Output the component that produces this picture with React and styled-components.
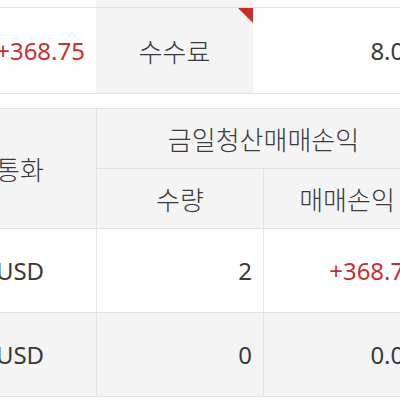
import React from 'react';
import styled, { createGlobalStyle } from 'styled-components';

const GlobalStyle = createGlobalStyle`
html, body {
  margin: 0;
  padding: 0;
  background: #fff;
  overflow: hidden;
}
body {
  font-family: 'Noto Sans', 'Noto Sans CJK KR', sans-serif;
  color: #3a3a3a;
}`;

const lineColor = '#e2e2e2';
const grayBg = '#f4f4f4';
const red = '#c9302c';

const Page = styled.div`
width: 486px;
margin-left: -56px;
margin-top: -78px;
display: flex;
flex-direction: column;
gap: 14px;`;

const SummaryTable = styled.div`
display: flex;
flex-direction: column;`;

const SummaryRow = styled.div`
display: grid;
grid-template-columns: 152px 157px 177px;
height: 86px;
border-bottom: 1px solid ${lineColor};
box-sizing: border-box;`;

const SummaryCell = styled.div`
position: relative;
display: flex;
align-items: center;
justify-content: ${(p) => (p.$center ? 'center' : 'flex-end')};
padding-right: ${(p) => (p.$center ? 0 : p.$pad || 12)}px;
background: ${(p) => (p.$gray ? grayBg : '#fff')};
color: ${(p) => (p.$red ? red : '#3a3a3a')};
font-size: ${(p) => (p.$kr ? 26 : 24)}px;
font-weight: ${(p) => (p.$kr ? 300 : 400)};
white-space: nowrap;`;

const Corner = styled.span`
position: absolute;
top: 0;
right: 0;
width: 0;
height: 0;
border-top: 15px solid #cf2a27;
border-left: 15px solid transparent;`;

const PnlTable = styled.div`
display: grid;
grid-template-columns: 153px 167px 166px;
grid-template-rows: 60px 60px 84px 84px;
border-top: 1px solid ${lineColor};`;

const Cell = styled.div`
display: flex;
align-items: center;
justify-content: ${(p) => p.$justify || 'center'};
padding-right: ${(p) => (p.$justify === 'flex-end' ? p.$pad || 12 : 0)}px;
grid-column: ${(p) => p.$col || 'auto'};
grid-row: ${(p) => p.$row || 'auto'};
background: ${(p) => (p.$gray ? grayBg : '#fff')};
color: ${(p) => (p.$red ? red : '#3a3a3a')};
border-bottom: 1px solid ${lineColor};
border-right: ${(p) => (p.$last ? 'none' : `1px solid ${lineColor}`)};
font-size: ${(p) => (p.$kr ? 26 : 24)}px;
font-weight: ${(p) => (p.$kr ? 300 : 400)};
white-space: nowrap;
box-sizing: border-box;`;

const rows = [
  { cur: 'USD', qty: '2', pnl: '+368.75', red: true, gray: false },
  { cur: 'USD', qty: '0', pnl: '0.00', red: false, gray: true },
];

const App = () => (
  <>
    <GlobalStyle />
    <Page>
      <SummaryTable>
        <SummaryRow>
          <SummaryCell $pad={11} />
          <SummaryCell $gray $center />
          <SummaryCell />
        </SummaryRow>
        <SummaryRow>
          <SummaryCell $red $pad={11}>+368.75</SummaryCell>
          <SummaryCell $gray $center $kr>
            수수료
            <Corner />
          </SummaryCell>
          <SummaryCell>8.00</SummaryCell>
        </SummaryRow>
      </SummaryTable>

      <PnlTable>
        <Cell $gray $kr $row="1 / span 2">통화</Cell>
        <Cell $gray $kr $col="2 / span 2" $last>금일청산매매손익</Cell>
        <Cell $gray $kr>수량</Cell>
        <Cell $gray $kr $last>매매손익</Cell>
        {rows.map((r, i) => (
          <React.Fragment key={i}>
            <Cell $gray={r.gray}>{r.cur}</Cell>
            <Cell $gray={r.gray} $justify="flex-end" $pad={11}>{r.qty}</Cell>
            <Cell $gray={r.gray} $justify="flex-end" $red={r.red} $last>{r.pnl}</Cell>
          </React.Fragment>
        ))}
      </PnlTable>
    </Page>
  </>
);

export default App;
